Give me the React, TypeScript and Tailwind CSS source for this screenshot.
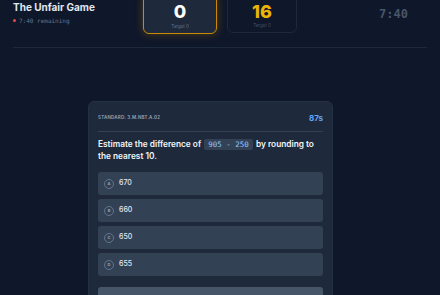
export default function App() {
  const options = [
    { key: "A", value: "670" },
    { key: "B", value: "660" },
    { key: "C", value: "650" },
    { key: "D", value: "655" },
  ]

  return (
    <div
      className="h-[295px] overflow-hidden bg-[#0f172a] text-white px-[13px]"
      style={{ fontFamily: "Inter, 'Noto Sans', sans-serif" }}
    >
      {/* header */}
      <div className="-mt-[8px] flex items-start justify-between pb-[13px] border-b border-[#1e293b]">
        <div className="w-[120px] pt-[9px]">
          <h1 className="text-[10px] font-bold leading-[12px] text-[#e2e8f0]">The Unfair Game</h1>
          <div className="mt-[3px] flex items-center gap-[3px]">
            <span className="w-[3px] h-[3px] rounded-full bg-[#ef4444]" />
            <span className="text-[6px] text-[#64748b]" style={{ fontFamily: "'DejaVu Sans Mono', monospace" }}>
              7:40 remaining
            </span>
          </div>
        </div>

        <div className="flex gap-[10px]">
          <div className="w-[74px] h-[42px] rounded-[6px] border-[1.5px] border-[#ca8a04] bg-[#1e293b] shadow-[0_0_8px_rgba(202,138,4,0.35)] flex flex-col items-center justify-center">
            <span className="text-[18px] font-extrabold leading-[18px] text-white mt-[8px]">0</span>
            <span className="text-[4.5px] text-[#64748b] mt-[3px]">Target 0</span>
          </div>
          <div className="w-[70px] h-[41px] rounded-[6px] border border-[#1e293b] flex flex-col items-center justify-center">
            <span className="text-[18px] font-extrabold leading-[18px] text-[#eab308] mt-[8px]">16</span>
            <span className="text-[4.5px] text-[#475569] mt-[2px]">Target 0</span>
          </div>
        </div>

        <div className="w-[120px] flex justify-end pt-[13px] pr-[19px]">
          <span className="text-[12px] font-bold text-[#475569]" style={{ fontFamily: "'DejaVu Sans Mono', monospace" }}>
            7:40
          </span>
        </div>
      </div>

      {/* question card */}
      <div className="mt-[53px] ml-[75px] w-[245px] rounded-[6px] bg-[#1e293b] px-[9px] pt-[10px] pb-[10px] border border-[#243045]">
        <div className="flex items-center justify-between pb-[7px] border-b border-[#334155]">
          <span className="text-[4.5px] font-semibold tracking-[0.2px] text-[#94a3b8]">STANDARD: 3.M.NBT.A.02</span>
          <span className="text-[8px] font-bold text-[#60a5fa]">87s</span>
        </div>

        <p className="mt-[6px] text-[8.3px] font-semibold leading-[12px] text-[#f1f5f9]">
          Estimate the difference of{" "}
          <span
            className="inline-block mx-[1px] rounded-[2px] bg-[#334155] px-[4px] text-[7.5px] font-normal leading-[11px] text-[#93c5fd]"
            style={{ fontFamily: "'DejaVu Sans Mono', monospace" }}
          >
            905 - 250
          </span>{" "}
          <span className="whitespace-nowrap">by rounding to</span>
          <br />
          the nearest 10.
        </p>

        <div className="mt-[10px] flex flex-col gap-[4px]">
          {options.map(o => (
            <div key={o.key} className="h-[23px] rounded-[3px] bg-[#334155] flex items-center px-[6px] gap-[5px]">
              <span className="w-[10px] h-[10px] rounded-full border border-[#64748b] flex items-center justify-center text-[4px] font-bold text-[#94a3b8]">
                {o.key}
              </span>
              <span className="text-[7px] font-medium text-[#e2e8f0]">{o.value}</span>
            </div>
          ))}
        </div>

        <div className="mt-[11px] h-[24px] rounded-[3px] bg-[#475569]" />
      </div>
    </div>
  )
}
